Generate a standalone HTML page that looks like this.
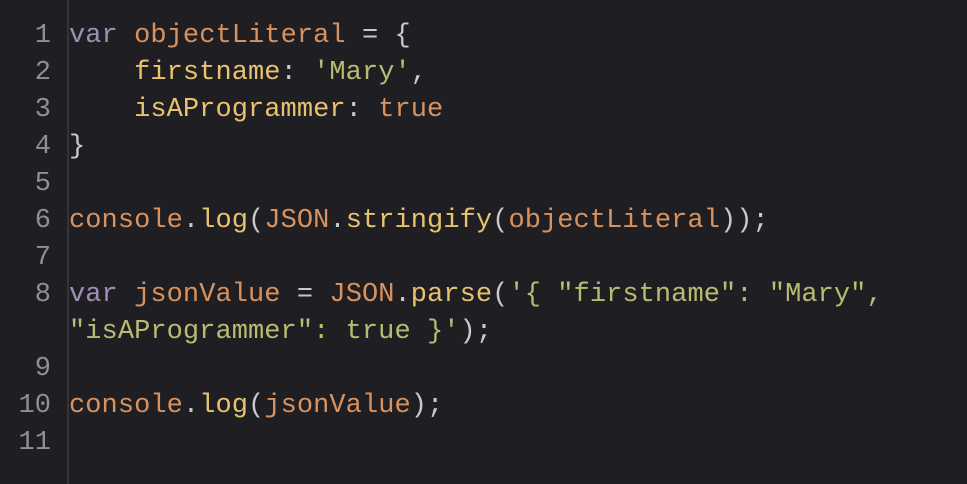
<!DOCTYPE html>
<html><head><style>
html,body{margin:0;padding:0;background:#1f1f23;width:967px;height:484px;overflow:hidden}
.g{position:absolute;left:67px;top:0;width:2px;height:484px;background:#34343a}
.ln{position:absolute;left:0;width:51px;text-align:right;color:#8e9096}
.c{position:absolute;left:69px;white-space:pre}
div.r{font-family:"Liberation Mono",monospace;font-size:27px;line-height:37px;height:37px;letter-spacing:0.07px;margin-top:3px}
.k{color:#9f8fb4}.o{color:#d9925e}.y{color:#e8c26e}.s{color:#b8bb72}.p{color:#c9c9cc}
</style></head><body>
<div class="g"></div>
<div class="r ln" style="top:15px">1</div><div class="r c" style="top:15px"><span class="k">var</span> <span class="o">objectLiteral</span> <span class="p">= {</span></div>
<div class="r ln" style="top:52px">2</div><div class="r c" style="top:52px">    <span class="y">firstname</span><span class="p">:</span> <span class="s">'Mary'</span><span class="p">,</span></div>
<div class="r ln" style="top:89px">3</div><div class="r c" style="top:89px">    <span class="y">isAProgrammer</span><span class="p">:</span> <span class="o">true</span></div>
<div class="r ln" style="top:126px">4</div><div class="r c" style="top:126px"><span class="p">}</span></div>
<div class="r ln" style="top:163px">5</div>
<div class="r ln" style="top:200px">6</div><div class="r c" style="top:200px"><span class="o">console</span><span class="p">.</span><span class="y">log</span><span class="p">(</span><span class="o">JSON</span><span class="p">.</span><span class="y">stringify</span><span class="p">(</span><span class="o">objectLiteral</span><span class="p">));</span></div>
<div class="r ln" style="top:237px">7</div>
<div class="r ln" style="top:274px">8</div><div class="r c" style="top:274px"><span class="k">var</span> <span class="o">jsonValue</span> <span class="p">=</span> <span class="o">JSON</span><span class="p">.</span><span class="y">parse</span><span class="p">(</span><span class="s">'{ "firstname": "Mary",</span></div>
<div class="r c" style="top:311px"><span class="s">"isAProgrammer": true }'</span><span class="p">);</span></div>
<div class="r ln" style="top:348px">9</div>
<div class="r ln" style="top:385px">10</div><div class="r c" style="top:385px"><span class="o">console</span><span class="p">.</span><span class="y">log</span><span class="p">(</span><span class="o">jsonValue</span><span class="p">);</span></div>
<div class="r ln" style="top:422px">11</div>
</body></html>
